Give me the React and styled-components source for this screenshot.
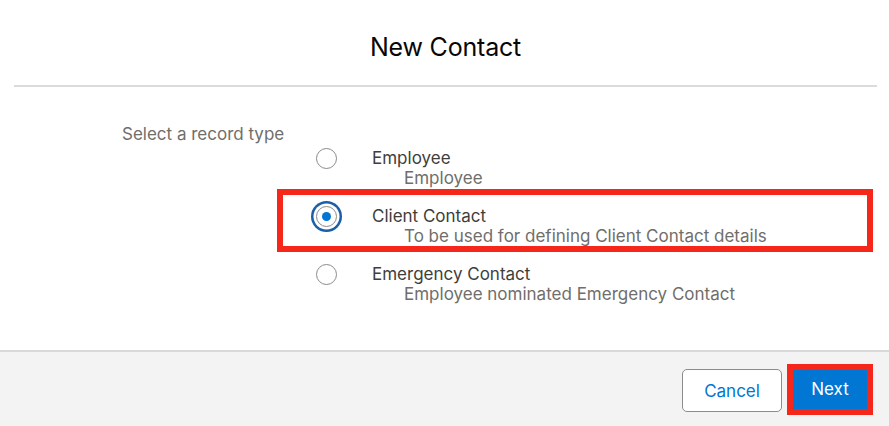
import React from "react";
import styled, { createGlobalStyle } from "styled-components";

const GlobalStyle = createGlobalStyle`
	* {
		box-sizing: border-box;
	}
	html,
	body {
		margin: 0;
		padding: 0;
		background: #ffffff;
		font-family: Inter, "Liberation Sans", Arial, sans-serif;
	}
`;

const recordTypes = [
	{ id: "employee", label: "Employee", description: "Employee" },
	{ id: "client", label: "Client Contact", description: "To be used for defining Client Contact details" },
	{ id: "emergency", label: "Emergency Contact", description: "Employee nominated Emergency Contact" },
];

const App = () => {
	const selected = "client";

	return (
		<Modal>
			<GlobalStyle />
			{/* header */}
			<Header>
				<h2>New Contact</h2>
			</Header>
			{/* record type picker */}
			<Body>
				<FieldLabel>Select a record type</FieldLabel>
				<Options>
					{recordTypes.map((type) => (
						<Option key={type.id} $highlighted={type.id === selected}>
							<Radio $checked={type.id === selected} />
							<OptionText>
								<span className="label">{type.label}</span>
								<span className="description">{type.description}</span>
							</OptionText>
						</Option>
					))}
				</Options>
			</Body>
			{/* footer actions */}
			<Footer>
				<Button>Cancel</Button>
				<Highlight>
					<Button $brand>Next</Button>
				</Highlight>
			</Footer>
		</Modal>
	);
};

export default App;

const Modal = styled.div`
	height: 100vh;
	display: flex;
	flex-direction: column;
	background: #ffffff;
	color: #181818;
`;

const Header = styled.div`
	height: 87px;
	margin: 0 12px 0 14px;
	border-bottom: 2px solid #dddbda;
	display: flex;
	align-items: center;
	justify-content: center;
	padding-top: 8px;
	h2 {
		margin: 0;
		font-size: 25px;
		font-weight: 400;
		color: #080707;
		letter-spacing: -0.2px;
	}
`;

const Body = styled.div`
	flex: 1;
	display: flex;
	align-items: flex-start;
	padding-top: 37px;
`;

const FieldLabel = styled.div`
	width: 283px;
	flex-shrink: 0;
	padding-left: 122px;
	white-space: nowrap;
	font-size: 17px;
	line-height: 20px;
	color: #706e6b;
`;

const Options = styled.div`
	flex: 1;
	display: flex;
	flex-direction: column;
	gap: 7px;
	margin-top: 13px;
	margin-right: 22px;
`;

const Option = styled.div`
	height: 51px;
	display: flex;
	align-items: flex-start;
	padding: 11px 0 0 33px;
	outline: ${(p) => (p.$highlighted ? "6px solid #f5261a" : "none")};
	outline-offset: 0;
`;

const Radio = styled.span`
	position: relative;
	width: 21px;
	height: 21px;
	flex-shrink: 0;
	border-radius: 50%;
	border: 1.5px solid #8a8a8a;
	background: #ffffff;
	box-shadow: ${(p) => (p.$checked ? "0 0 0 2.5px #ffffff, 0 0 0 5px #1b5fa8" : "none")};
	&::after {
		content: "";
		display: ${(p) => (p.$checked ? "block" : "none")};
		position: absolute;
		top: 50%;
		left: 50%;
		width: 9px;
		height: 9px;
		margin: -4.5px 0 0 -4.5px;
		border-radius: 50%;
		background: #0176d3;
	}
`;

const OptionText = styled.div`
	display: flex;
	flex-direction: column;
	margin-left: 35px;
	margin-top: 0;
	font-size: 17px;
	line-height: 20px;
	.label {
		color: #3e3e3c;
	}
	.description {
		padding-left: 32px;
		color: #706e6b;
	}
`;

const Footer = styled.div`
	height: 76px;
	flex-shrink: 0;
	display: flex;
	align-items: center;
	justify-content: flex-end;
	gap: 5px;
	padding: 3px 16px 0 0;
	background: #f3f3f3;
	border-top: 2px solid #d8d8d8;
`;

const Highlight = styled.span`
	display: flex;
	border: 6px solid #f5261a;
	margin-top: -3px;
`;

const Button = styled.button`
	height: ${(p) => (p.$brand ? "39px" : "43px")};
	width: ${(p) => (p.$brand ? "74px" : "100px")};
	padding: 0;
	border: ${(p) => (p.$brand ? "none" : "1px solid #8c8c8c")};
	border-radius: ${(p) => (p.$brand ? "0" : "5px")};
	background: ${(p) => (p.$brand ? "#0176d3" : "#ffffff")};
	color: ${(p) => (p.$brand ? "#ffffff" : "#0176d3")};
	font-family: Inter, "Liberation Sans", Arial, sans-serif;
	font-size: 17px;
	cursor: pointer;
`;
